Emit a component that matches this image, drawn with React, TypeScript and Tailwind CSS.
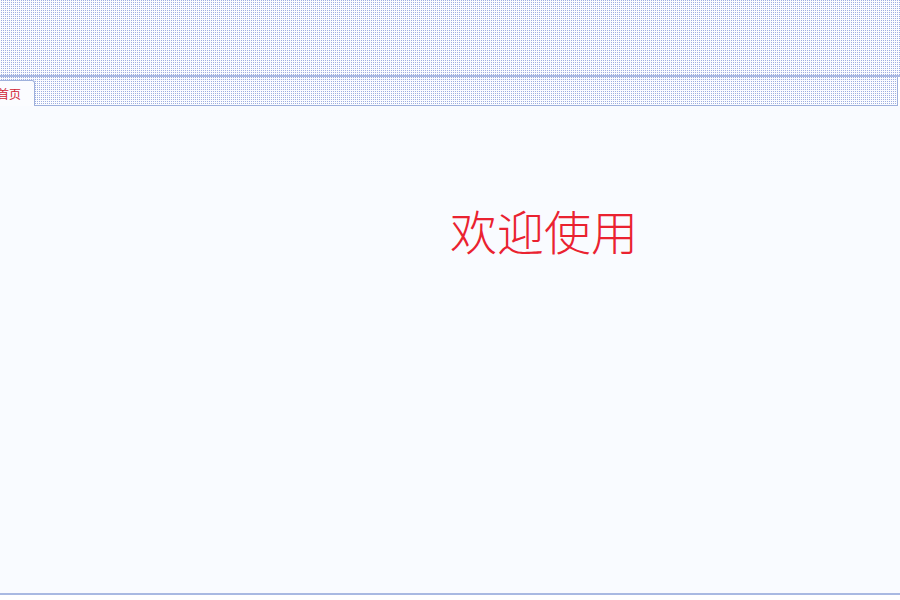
const DOTS =
  'bg-[#fbfcff] bg-[conic-gradient(#9eaee0_0_25%,transparent_0)] bg-[length:2px_2px]';

export default function App() {
  return (
    <div className="w-[900px] h-[600px] flex flex-col bg-white overflow-hidden font-['Noto_Sans_CJK_SC',sans-serif]">
      {/* 顶部 */}
      <div className={`h-[75px] flex-none ${DOTS}`} />
      <div className="h-[2px] flex-none bg-[#a9b9e2]" />

      {/* 标签栏 */}
      <div className={`h-[29px] flex-none flex items-end border-b border-r border-[#9fb1dc] mr-[2px] ${DOTS}`}>
        <div className="ml-[-4px] h-[26px] w-[39px] bg-[#fbfcff] border-t border-r border-[#9fb1dc] rounded-tr-[3px] mb-[-1px] flex items-center pl-[1px] pt-[1px]">
          <span className="text-[12px] leading-none text-[#d02435]">首页</span>
        </div>
      </div>

      {/* 内容 */}
      <div className="flex-1 min-h-0 bg-[#f9fbff] pt-[96px] pl-[450px]">
        <div className="text-[47px] leading-[56px] text-[#ea2230] font-light">欢迎使用</div>
      </div>
      <div className="h-[2px] flex-none bg-[#a9b9e2]" />
      <div className="h-[5px] flex-none bg-white" />
    </div>
  );
}
